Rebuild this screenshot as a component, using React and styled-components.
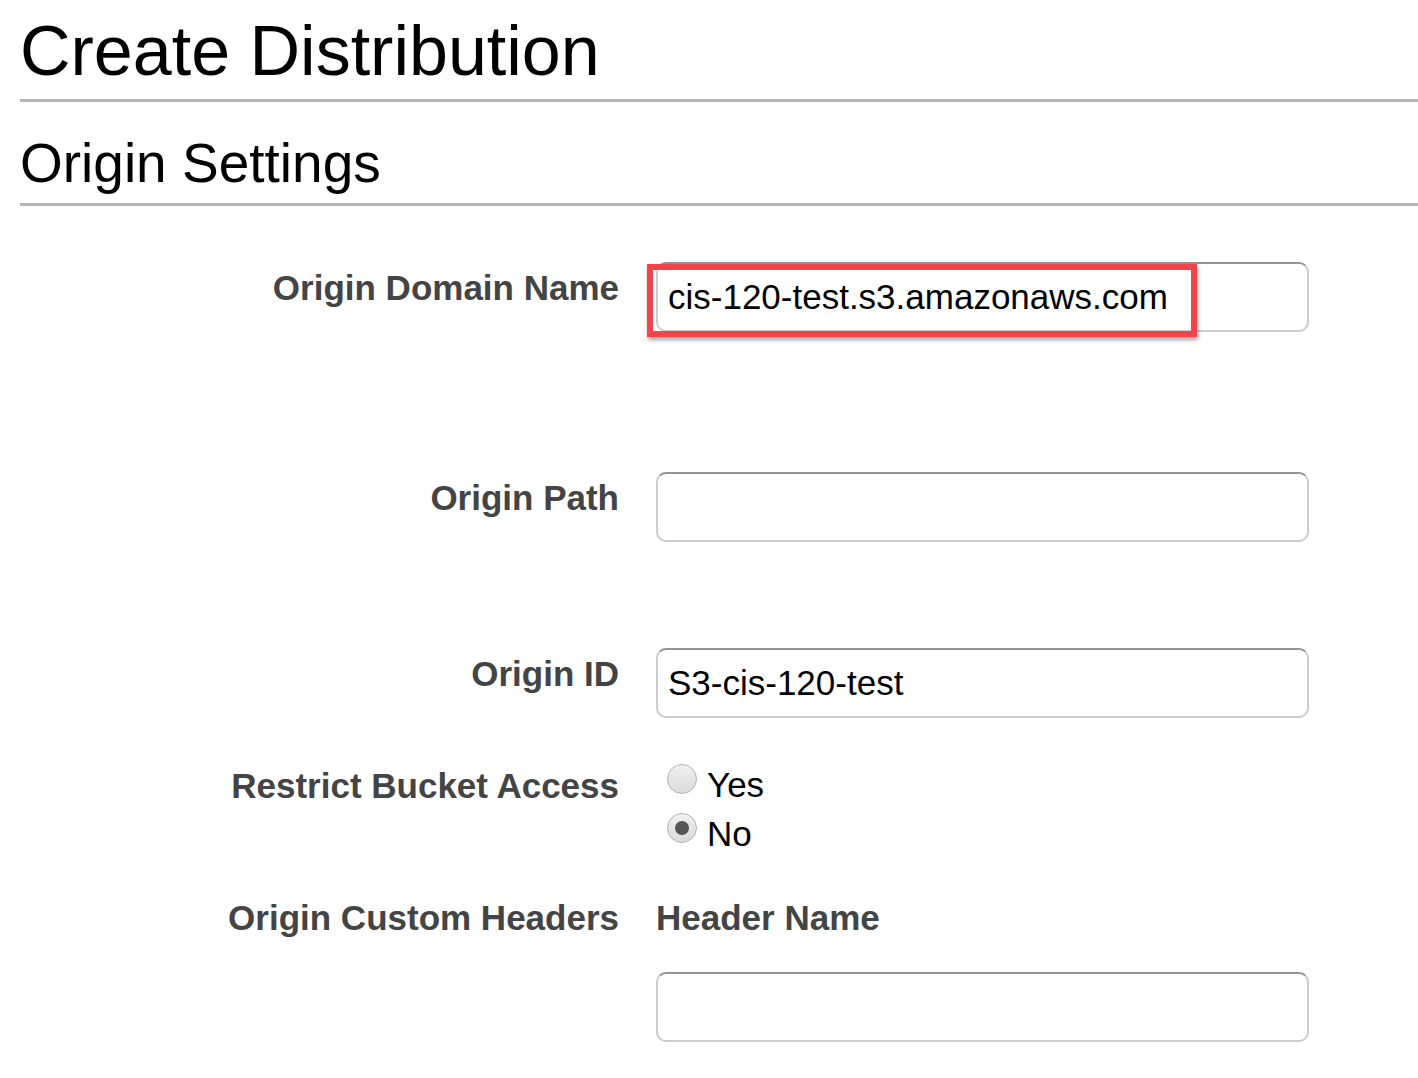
import React from "react";
import styled, { createGlobalStyle } from "styled-components";

const GlobalStyle = createGlobalStyle`
  body {
    margin: 0;
    background: #fff;
    font-family: "Liberation Sans", Arial, sans-serif;
    color: #000;
  }
`;

const Page = styled.div`
  padding-left: 20px;
  padding-top: 16px;
  padding-bottom: 40px;
`;

const Title = styled.h1`
  margin: 0;
  font-size: 70px;
  font-weight: normal;
  line-height: 1;
  padding-bottom: 13px;
  border-bottom: 3px solid #b4b4b4;
`;

const SectionTitle = styled.h2`
  margin: 34px 0 0;
  font-size: 55px;
  font-weight: normal;
  line-height: 1;
  padding-bottom: 12px;
  border-bottom: 3px solid #b4b4b4;
`;

const Form = styled.div`
  padding-top: 56px;
`;

const Row = styled.div`
  display: flex;
  gap: 37px;
  margin-bottom: ${(p) => p.$after || 0}px;
`;

const Label = styled.div`
  flex: none;
  width: 599px;
  text-align: right;
  padding-top: 5px;
  font-size: 35px;
  line-height: 41px;
  font-weight: bold;
  color: #444;
`;

const Field = styled.div`
  position: relative;
  width: 653px;
`;

const Input = styled.div`
  box-sizing: border-box;
  height: 70px;
  display: flex;
  align-items: center;
  padding: 0 10px;
  border: 2px solid #cbcbcb;
  border-top-color: #949494;
  border-radius: 10px;
  font-size: 35px;
  color: #000;
  background: #fff;
`;

const Highlight = styled.div`
  position: absolute;
  left: -9px;
  top: 2px;
  width: 550px;
  height: 73px;
  box-sizing: border-box;
  border: 6px solid #f0434a;
  box-shadow: 1px 3px 4px rgba(0, 0, 0, 0.35);
  pointer-events: none;
`;

const Options = styled.div`
  display: flex;
  flex-direction: column;
`;

const Option = styled.label`
  display: flex;
  align-items: center;
  height: 49px;
  gap: 10px;
  padding-left: 11px;
  font-size: 35px;
  color: #000;
`;

const Radio = styled.span`
  flex: none;
  position: relative;
  width: 30px;
  height: 30px;
  margin-top: -11px;
  box-sizing: border-box;
  border-radius: 50%;
  border: 1.5px solid #b3b3b3;
  background: linear-gradient(#f0f0f0, #dadada);

  &::after {
    content: "";
    display: ${(p) => (p.$checked ? "block" : "none")};
    position: absolute;
    left: 50%;
    top: 50%;
    width: 14px;
    height: 14px;
    margin: -7px 0 0 -7px;
    border-radius: 50%;
    background: #555;
  }
`;

const SubLabel = styled.div`
  padding-top: 5px;
  font-size: 35px;
  line-height: 41px;
  font-weight: bold;
  color: #444;
  margin-bottom: 34px;
`;

export default function App() {
  return (
    <Page>
      <GlobalStyle />
      <Title>Create Distribution</Title>
      <SectionTitle>Origin Settings</SectionTitle>
      <Form>
        <Row $after={140}>
          <Label>Origin Domain Name</Label>
          <Field>
            <Input>cis-120-test.s3.amazonaws.com</Input>
            <Highlight />
          </Field>
        </Row>
        <Row $after={106}>
          <Label>Origin Path</Label>
          <Field>
            <Input />
          </Field>
        </Row>
        <Row $after={42}>
          <Label>Origin ID</Label>
          <Field>
            <Input>S3-cis-120-test</Input>
          </Field>
        </Row>
        <Row $after={34}>
          <Label>Restrict Bucket Access</Label>
          <Options>
            <Option>
              <Radio />
              Yes
            </Option>
            <Option>
              <Radio $checked />
              No
            </Option>
          </Options>
        </Row>
        <Row>
          <Label>Origin Custom Headers</Label>
          <Field>
            <SubLabel>Header Name</SubLabel>
            <Input />
          </Field>
        </Row>
      </Form>
    </Page>
  );
}
